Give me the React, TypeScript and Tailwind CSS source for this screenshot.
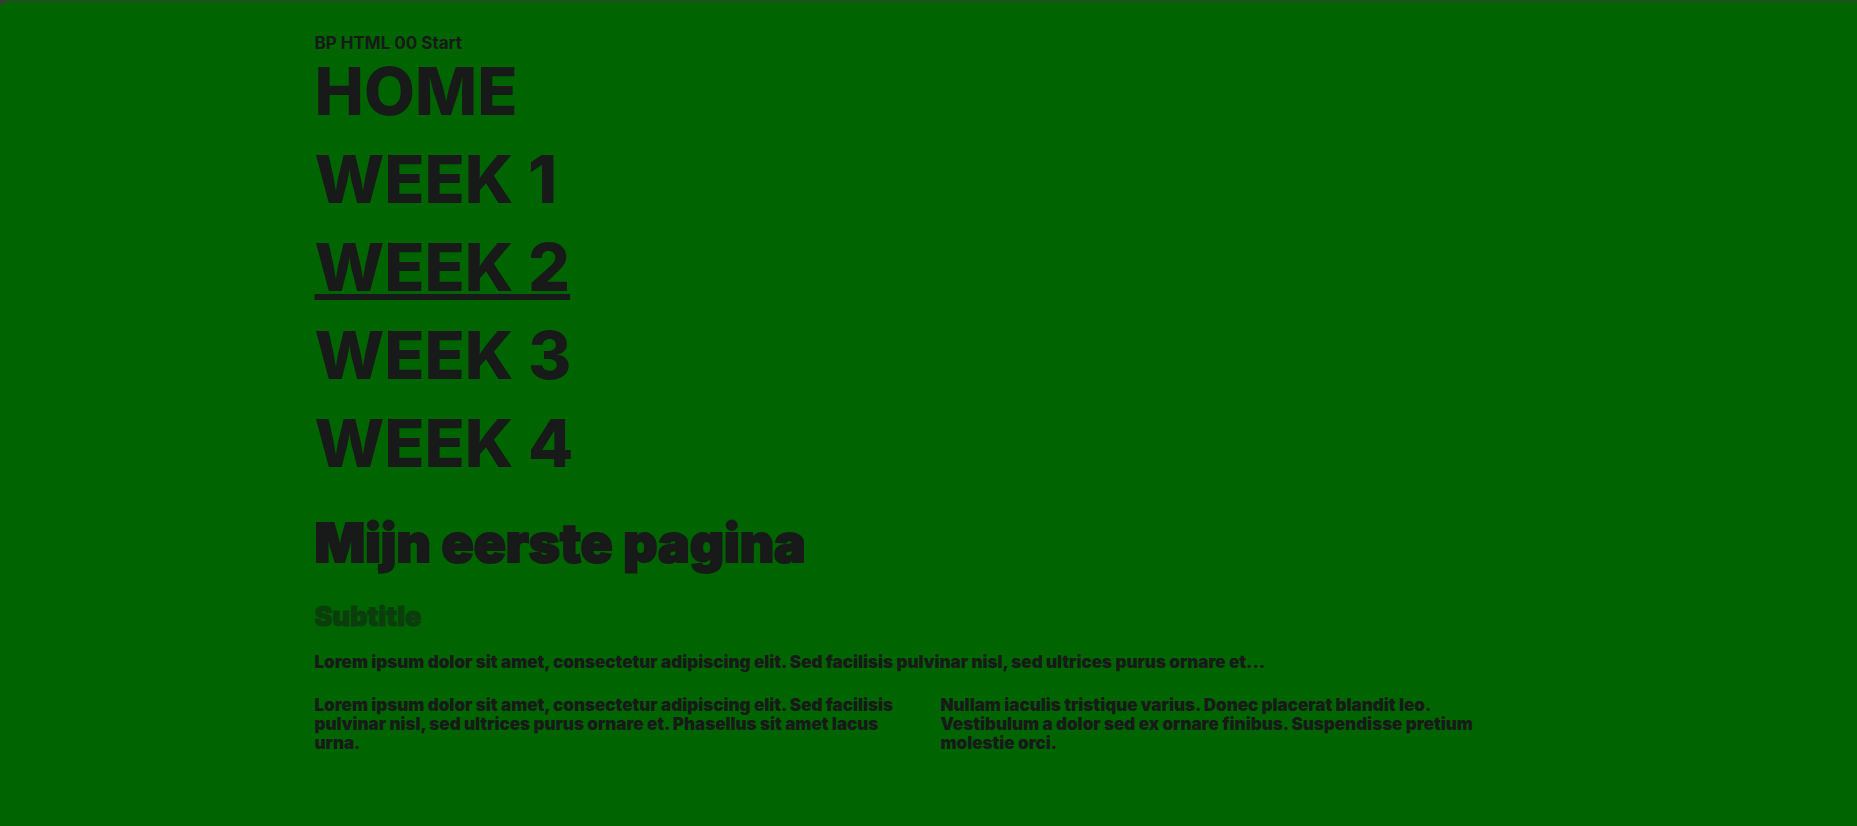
const links = ["Home", "Week 1", "Week 2", "Week 3", "Week 4"];
const current = "Week 2";

export default function App() {
  return (
    <div className="min-h-screen bg-[#3a3a3a] pt-px">
      <div className="min-h-[calc(100vh-1px)] rounded-tl-lg bg-[#006400] font-['Inter',sans-serif] text-[#171a18]">
        <div className="mx-auto max-w-[1228px] pt-8">
          <header>
            <p className="text-[17px] leading-5 font-bold">BP HTML 00 Start</p>
            <nav aria-label="Weeks">
              <ul>
                {links.map((label) => (
                  <li key={label} className="h-[88px] text-[66px] leading-[76px] font-extrabold uppercase">
                    <a
                      href="#"
                      aria-current={label === current ? "page" : undefined}
                      className="decoration-[6px] underline-offset-[3px] aria-[current=page]:underline"
                    >
                      {label}
                    </a>
                  </li>
                ))}
              </ul>
            </nav>
          </header>
          <main className="pt-5 font-black">
            <h1 className="text-[53px] leading-[60px] [-webkit-text-stroke:2px]">Mijn eerste pagina</h1>
            <h2 className="mt-7 text-[27px] leading-8 opacity-50 [-webkit-text-stroke:1px]">Subtitle</h2>
            <p className="mt-5 text-[17px] leading-[19px]">
              Lorem ipsum dolor sit amet, consectetur adipiscing elit. Sed facilisis pulvinar nisl, sed ultrices purus
              ornare et...
            </p>
            <div className="mt-6 grid grid-cols-2 gap-6 text-[17px] leading-[19px]">
              <p className="pr-4">
                Lorem ipsum dolor sit amet, consectetur adipiscing elit. Sed facilisis pulvinar nisl, sed ultrices
                purus ornare et. Phasellus sit amet lacus urna.
              </p>
              <p className="pr-4">
                Nullam iaculis tristique varius. Donec placerat blandit leo. Vestibulum a dolor sed ex ornare finibus.
                Suspendisse pretium molestie orci.
              </p>
            </div>
          </main>
        </div>
      </div>
    </div>
  );
}
